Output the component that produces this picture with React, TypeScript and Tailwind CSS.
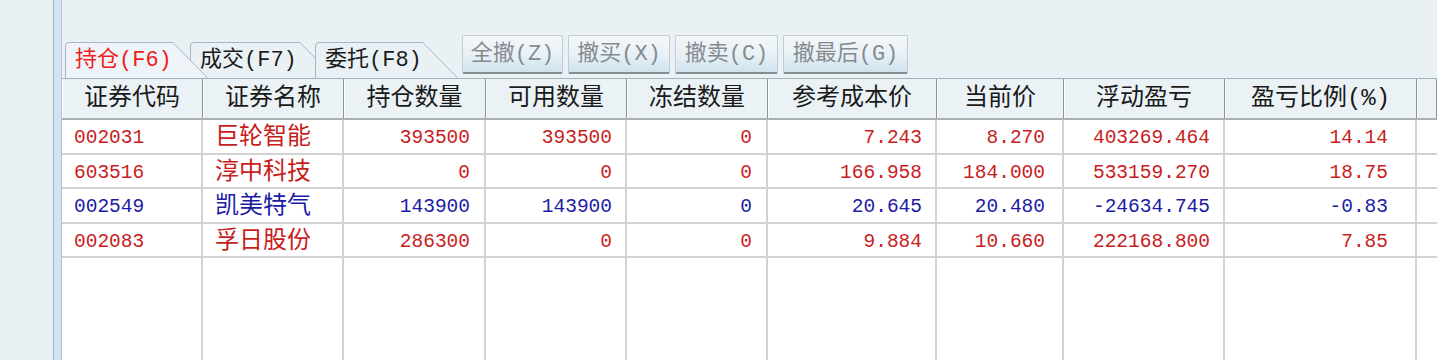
const COLS = "grid grid-cols-[141px_141px_142px_141px_141px_169px_127px_161px_192px_1fr]";
const FONT = "font-['Liberation_Mono','Noto_Sans_CJK_SC',monospace]";

type Row = {
  code: string;
  name: string;
  hold: string;
  avail: string;
  frozen: string;
  cost: string;
  price: string;
  pl: string;
  pct: string;
  up: boolean;
};

const ROWS: Row[] = [
  { code: "002031", name: "巨轮智能", hold: "393500", avail: "393500", frozen: "0", cost: "7.243", price: "8.270", pl: "403269.464", pct: "14.14", up: true },
  { code: "603516", name: "淳中科技", hold: "0", avail: "0", frozen: "0", cost: "166.958", price: "184.000", pl: "533159.270", pct: "18.75", up: true },
  { code: "002549", name: "凯美特气", hold: "143900", avail: "143900", frozen: "0", cost: "20.645", price: "20.480", pl: "-24634.745", pct: "-0.83", up: false },
  { code: "002083", name: "孚日股份", hold: "286300", avail: "0", frozen: "0", cost: "9.884", price: "10.660", pl: "222168.800", pct: "7.85", up: true },
];

const HEADERS = ["证券代码", "证券名称", "持仓数量", "可用数量", "冻结数量", "参考成本价", "当前价", "浮动盈亏", "盈亏比例(%)", ""];

function Tab({ label, width, active, className }: { label: string; width: number; active?: boolean; className: string }) {
  return (
    <div className={`relative h-[36px] shrink-0 ${className}`} style={{ width }}>
      <svg className="absolute inset-0" width={width} height={36} viewBox={`0 0 ${width} 36`}>
        <path
          d={`M0.5 36 V4 Q0.5 0.5 4 0.5 H${width - 35} L${width - 0.5} 36`}
          fill={active ? "#eef4f8" : "#eaf1f5"}
          stroke="#a7b5c4"
        />
      </svg>
      <span
        className={`relative flex h-full items-center pl-[10px] pt-[1px] text-[22px] ${
          active ? "text-[#f01c1c]" : "text-[#1a1a1a]"
        }`}
      >
        {label}
      </span>
    </div>
  );
}

function ActionButton({ label, width }: { label: string; width: number }) {
  return (
    <button
      className="flex h-[39px] shrink-0 items-center justify-center rounded-[2px] border border-[#c3ccd4] border-b-2 border-b-[#8a8d90] bg-linear-to-b from-[#f3f7fa] via-[#e9f1f6] to-[#cfe3ef] text-[22px] text-[#858b90]"
      style={{ width }}
    >
      {label}
    </button>
  );
}

function NumCell({ value, pr, color }: { value: string; pr: string; color: string }) {
  return (
    <div className={`flex items-center justify-end border-r-2 border-[#d2d2d2] pt-[2px] text-[19.5px] ${pr} ${color}`}>
      {value}
    </div>
  );
}

export default function App() {
  return (
    <div className={`flex h-[360px] w-[1437px] overflow-hidden bg-[#e9f1f5] ${FONT}`}>
      <div className="w-[53px] shrink-0 bg-[#e8f0f4]" />
      <div className="w-[9px] shrink-0 border-x border-l-[#a6b6c8] border-r-[#b4c2d0] bg-[#d4e2f5]" />

      <div className="flex min-w-0 flex-1 flex-col">
        <div className="h-[35px] shrink-0" />

        <div className="flex h-[43px] shrink-0 items-end">
          <Tab label="持仓(F6)" width={143} active className="z-20 ml-[3px]" />
          <Tab label="成交(F7)" width={145} className="z-0 -ml-[18px]" />
          <Tab label="委托(F8)" width={143} className="z-10 -ml-[20px]" />
          <div className="ml-[4px] flex gap-[5px] self-start">
            <ActionButton label="全撤(Z)" width={101} />
            <ActionButton label="撤买(X)" width={102} />
            <ActionButton label="撤卖(C)" width={103} />
            <ActionButton label="撤最后(G)" width={125} />
          </div>
        </div>

        <div className={`${COLS} relative z-30 h-[42px] shrink-0 border-t border-b-2 border-t-[#a3b0bd] border-b-[#a9afb5] bg-[#ebf2f6]`}>
          {HEADERS.map((h, i) => (
            <div
              key={i}
              className="flex items-center justify-center border-r border-[#8f9294] text-[24px] text-[#1a1a1a] shadow-[inset_1px_0_0_#ffffff]"
            >
              {h}
            </div>
          ))}
        </div>

        <div className="flex flex-1 flex-col bg-white">
          {ROWS.map((r) => {
            const color = r.up ? "text-[#c81d1d]" : "text-[#1b1ba4]";
            return (
              <div key={r.code} className={`${COLS} h-[34.5px] shrink-0 border-b-2 border-[#d2d2d2]`}>
                <div className={`flex items-center border-r-2 border-[#d2d2d2] pl-[12px] pt-[2px] text-[19.5px] ${color}`}>{r.code}</div>
                <div className={`flex items-center border-r-2 border-[#d2d2d2] pl-[12px] text-[24px] ${color}`}>{r.name}</div>
                <NumCell value={r.hold} pr="pr-[14px]" color={color} />
                <NumCell value={r.avail} pr="pr-[13px]" color={color} />
                <NumCell value={r.frozen} pr="pr-[14px]" color={color} />
                <NumCell value={r.cost} pr="pr-[13px]" color={color} />
                <NumCell value={r.price} pr="pr-[17px]" color={color} />
                <NumCell value={r.pl} pr="pr-[13px]" color={color} />
                <NumCell value={r.pct} pr="pr-[27px]" color={color} />
                <div />
              </div>
            );
          })}
          <div className={`${COLS} flex-1`}>
            {Array.from({ length: 9 }).map((_, i) => (
              <div key={i} className="border-r-2 border-[#d2d2d2]" />
            ))}
            <div />
          </div>
        </div>
      </div>
    </div>
  );
}
